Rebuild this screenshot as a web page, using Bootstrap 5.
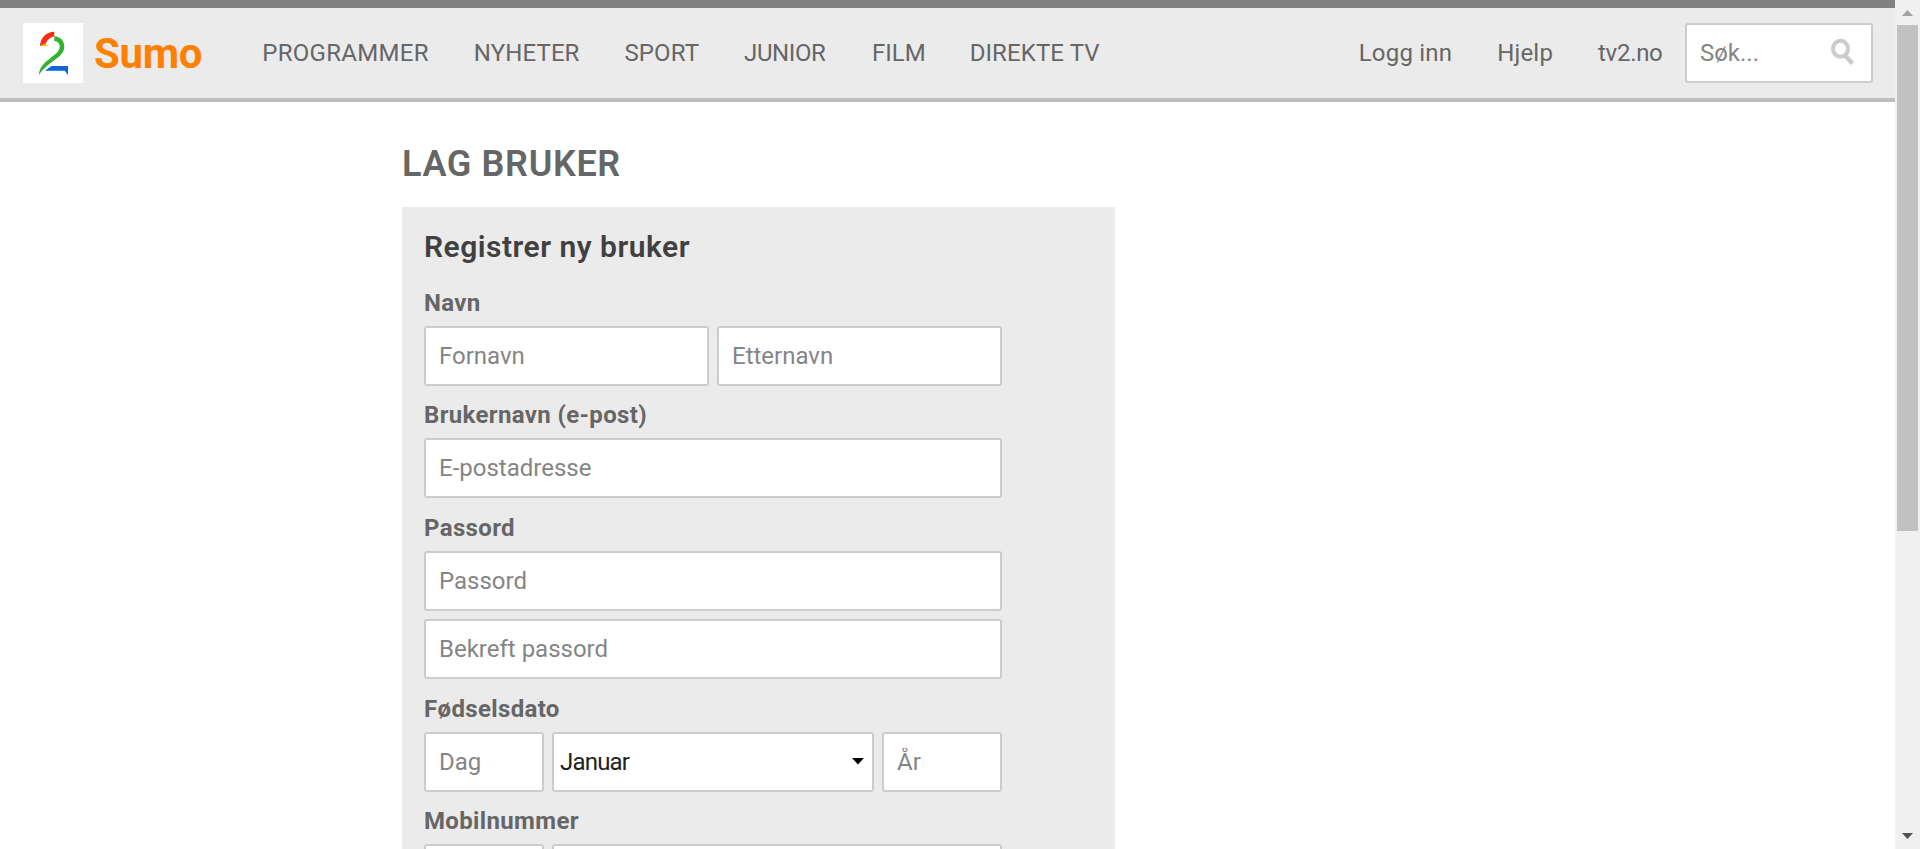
<!DOCTYPE html>
<html lang="no">
<head>
<meta charset="utf-8">
<title>TV 2 Sumo – Lag bruker</title>
<link rel="stylesheet" href="https://cdn.jsdelivr.net/npm/bootstrap@5.3.0/dist/css/bootstrap.min.css">
<style>
  body { font-family: Roboto, "Liberation Sans", sans-serif; font-size: 24px; line-height: 30px; color: #666; height: 849px; overflow: hidden; font-kerning: normal; }
  .site-header { height: 102px; background: #ebebeb; border-top: 8px solid #808080; border-bottom: 4px solid #bfbfbf; padding: 0 22px 0 23px; }
  .logo-tile { width: 60px; height: 60px; background: #fff; }
  .logo-name { font-size: 42px; font-weight: 700; color: #ff8000; line-height: 60px; margin-left: 11px; padding-top: 2px; letter-spacing: -.3px; }
  .site-header .nav-link { color: #666; padding: 0 22.5px; line-height: 60px; white-space: nowrap; }
  .main-menu { margin-left: 37.5px; }
  .main-menu .nav-link { letter-spacing: .1px; }
  .main-menu .wide { letter-spacing: .3px; }
  .main-menu .tight { letter-spacing: -.4px; padding-right: 24px; }
  .main-menu .film { letter-spacing: 0; padding-right: 21.5px; }
  .side-menu .nav-link { letter-spacing: .2px; }
  .side-menu .tight { letter-spacing: -.3px; }
  .form-control, .form-select { height: 60px; border: 2px solid #ccc; border-radius: 3px; padding: 0 13px; font-size: 24px; line-height: 56px; color: #222; background-color: #fff; }
  .form-control::placeholder { color: #858585; opacity: 1; }
  .form-select { padding: 0 30px 0 6px; background-image: url("data:image/svg+xml,%3Csvg xmlns='http://www.w3.org/2000/svg' viewBox='0 0 12 7'%3E%3Cpath d='M0 0h12L6 6.5z'/%3E%3C/svg%3E"); background-size: 12px 7px; background-position: right 8px center; letter-spacing: -.8px; }
  .search { width: 188px; }
  .search svg { right: 18px; top: 15px; }
  .page { width: 1895px; height: 849px; overflow: hidden; }
  .content { width: 713px; margin-left: 402px; }
  h1 { font-size: 36px; font-weight: 600; line-height: 44px; letter-spacing: .65px; margin: 40px 0 21px; color: #666; }
  .panel { background: #ebebeb; padding: 21px 22px 0; height: 642px; overflow: hidden; }
  h2 { font-size: 30px; font-weight: 600; line-height: 38px; letter-spacing: .5px; margin: 0 0 21.7px; color: #404040; }
  .fields { width: 578px; }
  .form-label { display: block; font-weight: 700; line-height: 30px; height: 30px; margin: 0 0 8px; letter-spacing: .35px; }
  .field-set { margin-bottom: 14.7px; }
  .short-field { width: 120px; flex: none; }
  .gap-field, .stack-field { gap: 8px; }
  .track { width: 25px; height: 849px; background: #f0f0f0; }
  .thumb { width: 21px; height: 506px; background: #c1c1c1; }
</style>
</head>
<body class="d-flex bg-white">
<div class="page">
  <header class="site-header d-flex align-items-center">
    <a class="d-flex align-items-center text-decoration-none" href="#">
      <span class="logo-tile"><svg class="d-block" width="60" height="60" viewBox="0 0 60 60">
        <path d="M31.300 8.800v4.700c-4.800.8-7.800 4-9.300 9.500H17C17.500 15 22.800 9 31.300 8.800z" fill="#f52d17"/>
        <path d="M17 23 21.500 20.500 26 23z" fill="#fdb913"/>
        <path d="M31.300 13.200c5.800.2 10 4.500 10 10.300 0 11.500-16.500 14.500-25.300 28.500C16 37.500 36.800 33 36.800 23.500c0-3-2-5.300-5.500-5.500z" fill="#30b42d"/>
        <path d="M28.500 43H45v9l-3.300-4.200H22z" fill="#0965d8"/>
      </svg></span>
      <span class="logo-name">Sumo</span>
    </a>
    <nav class="main-menu nav flex-nowrap">
      <a class="nav-link wide" href="#">PROGRAMMER</a>
      <a class="nav-link" href="#">NYHETER</a>
      <a class="nav-link" href="#">SPORT</a>
      <a class="nav-link tight" href="#">JUNIOR</a>
      <a class="nav-link film" href="#">FILM</a>
      <a class="nav-link" href="#">DIREKTE TV</a>
    </nav>
    <nav class="side-menu nav flex-nowrap ms-auto">
      <a class="nav-link" href="#">Logg inn</a>
      <a class="nav-link" href="#">Hjelp</a>
      <a class="nav-link tight" href="#">tv2.no</a>
    </nav>
    <form class="search position-relative">
      <input class="form-control" type="text" placeholder="Søk..." aria-label="Søk">
      <svg class="position-absolute" width="25" height="27" viewBox="0 0 25 27" fill="none" stroke="#ccc"><ellipse cx="10.500" cy="10.800" rx="7.500" ry="8" stroke-width="4"/><path d="m14.500 17 8 8.500" stroke-width="4.500"/></svg>
    </form>
  </header>
  <main class="content">
    <h1>LAG BRUKER</h1>
    <section class="panel">
      <h2>Registrer ny bruker</h2>
      <form class="fields">
        <div class="field-set">
          <label class="form-label">Navn</label>
          <div class="d-flex gap-field">
            <input class="form-control" type="text" placeholder="Fornavn">
            <input class="form-control" type="text" placeholder="Etternavn">
          </div>
        </div>
        <div class="field-set">
          <label class="form-label">Brukernavn (e-post)</label>
          <input class="form-control" type="text" placeholder="E-postadresse">
        </div>
        <div class="field-set">
          <label class="form-label">Passord</label>
          <div class="d-flex flex-column stack-field">
            <input class="form-control" type="password" placeholder="Passord">
            <input class="form-control" type="password" placeholder="Bekreft passord">
          </div>
        </div>
        <div class="field-set">
          <label class="form-label">Fødselsdato</label>
          <div class="d-flex gap-field">
            <input class="form-control short-field" type="text" placeholder="Dag">
            <select class="form-select"><option>Januar</option></select>
            <input class="form-control short-field" type="text" placeholder="År">
          </div>
        </div>
        <div class="field-set">
          <label class="form-label">Mobilnummer</label>
          <div class="d-flex gap-field">
            <input class="form-control short-field" type="text">
            <input class="form-control" type="text">
          </div>
        </div>
      </form>
    </section>
  </main>
</div>
<div class="track d-flex flex-column align-items-center">
  <svg class="d-block flex-shrink-0" width="21" height="25"><path d="M5 16h11l-5.500-6z" fill="#a3a3a3"/></svg>
  <div class="thumb flex-shrink-0"></div>
  <svg class="d-block mt-auto flex-shrink-0" width="21" height="25"><path d="M5 9h11l-5.500 6z" fill="#505050"/></svg>
</div>
<script src="https://cdn.jsdelivr.net/npm/bootstrap@5.3.0/dist/js/bootstrap.bundle.min.js"></script>
</body>
</html>
